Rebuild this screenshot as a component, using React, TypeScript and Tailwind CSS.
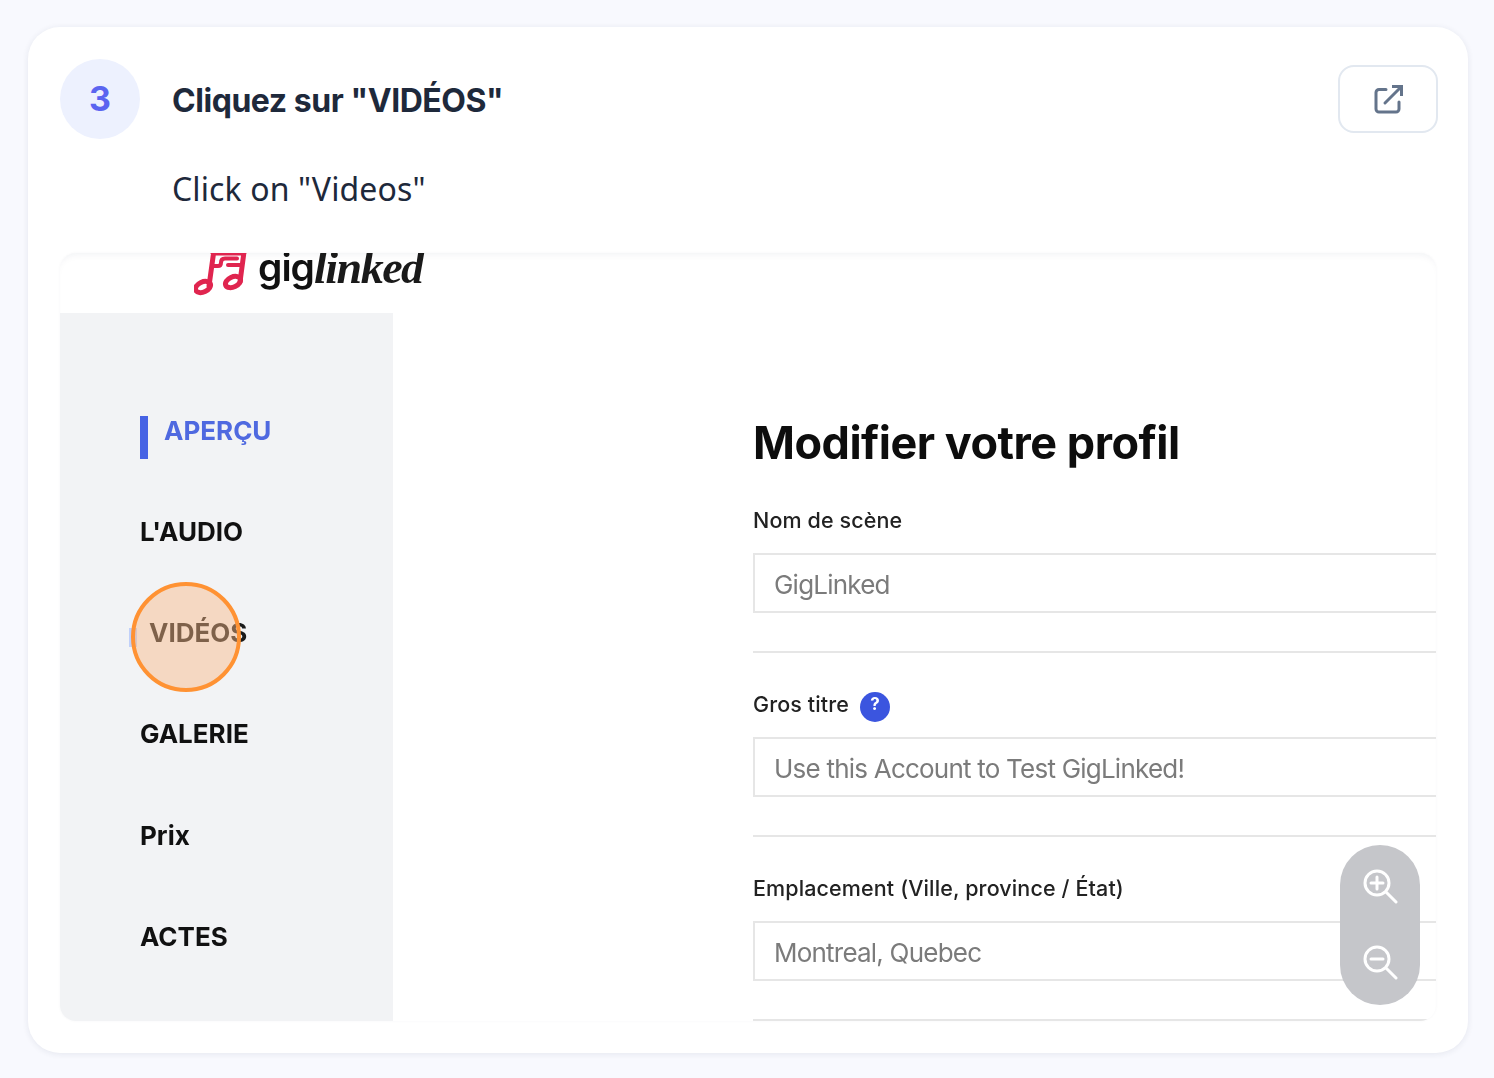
import React from "react";

const inter = "font-['Inter','Liberation_Sans',sans-serif]";

function NavItem({ label, active, shifted }: { label: string; active?: boolean; shifted?: boolean }) {
  return (
    <div className="relative flex h-[101.25px] items-center">
      {active && <div className="absolute left-0 top-[36px] h-[43px] w-[8px] bg-[#4763e4]" />}
      {shifted && <div className="absolute left-[-11px] top-[45px] h-[19px] w-[8px] bg-[#c0d0fa]" />}
      <span
        className={`text-[26px] font-bold leading-none tracking-[0px] ${active ? "ml-[24px] text-[#4f69e0]" : shifted ? "ml-[9px] text-[#1a1a1a]" : "text-[#111111]"}`}
      >
        {label}
      </span>
    </div>
  );
}

function Field({ label, value, help }: { label: string; value: string; help?: boolean }) {
  return (
    <div className="h-[184px] border-b-2 border-[#e6e6e6] pt-[35px]">
      <div className="flex h-[34px] items-center gap-[11px] text-[21.5px] font-medium leading-none tracking-[0.12px] text-[#222222]">
        <span>{label}</span>
        {help && (
          <span className="mt-[4px] flex h-[30px] w-[30px] items-center justify-center rounded-full bg-[#3b55df] pb-[6px] text-[17px] font-bold leading-none text-white">
            ?
          </span>
        )}
      </div>
      <div className="mt-[15px] flex h-[60px] items-center border-2 border-r-0 border-[#e6e6e6] pl-[19px] pt-[3px] text-[26px] leading-none tracking-[-0.78px] text-[#7b7b7b]">
        {value}
      </div>
    </div>
  );
}

export default function App() {
  return (
    <div className="min-h-[1078px] bg-[#f8f9fe] pb-[25px] pl-[28px] pt-[27px]">
      <div className="h-[1026px] w-[1440px] rounded-[32px] bg-white p-[32px] pr-[30px] shadow-[0_1px_6px_rgba(30,41,80,0.09)]">
        <div className="flex items-start">
          <div className="flex h-[80px] w-[80px] shrink-0 items-center justify-center rounded-full bg-[#edf1fe] font-['Inter','Liberation_Sans',sans-serif] text-[34px] font-bold leading-none text-[#5b65f0]">
            3
          </div>
          <div className="ml-[32px] flex-1 font-['Inter','Liberation_Sans',sans-serif] text-[#1e293b]">
            <h1 className="mt-[19px] text-[32px] font-bold leading-[46px] tracking-[-0.45px]">Cliquez sur "VIDÉOS"</h1>
          </div>
          <button className="mt-[6px] flex h-[68px] w-[100px] items-center justify-center rounded-[16px] border-2 border-[#e2e8f0] bg-white">
            <svg width="32" height="32" viewBox="0 0 32 32" fill="none" stroke="#64748b" strokeWidth="3" strokeLinecap="round" className="-ml-[1px] -mt-[1px]">
              <path d="M14 6.500H7a3 3 0 0 0-3 3V26a3 3 0 0 0 3 3h17a3 3 0 0 0 3-3v-7" strokeLinejoin="round" />
              <path d="M13 20 29 4" />
              <path d="M20 3.500h9.500V13" strokeLinecap="butt" strokeLinejoin="miter" />
            </svg>
          </button>
        </div>
        <p className="ml-[112px] mt-[26px] font-['Noto_Sans','Liberation_Sans',sans-serif] text-[32px] leading-[48px] tracking-[0.12px] text-[#1e293b]">
          Click on "Videos"
        </p>

        <div className={`relative mt-[40px] h-[768px] w-[1376px] overflow-hidden rounded-[16px] bg-white shadow-[inset_0_6px_8px_-6px_rgba(30,41,80,0.08),0_0_3px_rgba(30,41,80,0.04)] ${inter}`}>
          <div className="relative h-[60px] overflow-hidden">
            <div className="ml-[134px] flex h-[60px] items-start blur-[0.5px]">
              <svg width="56" height="46" viewBox="0 0 56 46" fill="none" stroke="#e0254f" strokeWidth="5" strokeLinecap="round" className="-mt-[3px]">
                <path d="M20 0 15 36M50 2 46 32M19 3H50" />
                <path d="M18 16H24Q27 16 27 12.500Q27 8.500 31 8.500H43M34 15H47" strokeWidth="4" />
                <ellipse cx="9" cy="37" rx="8" ry="5" transform="rotate(-25 9 37)" />
                <ellipse cx="39" cy="32" rx="8" ry="5" transform="rotate(-25 39 32)" />
              </svg>
              <span className="ml-[8px] -mt-[9px] text-[39px] font-semibold leading-[46px] tracking-[-1px] text-[#111111]">gig</span>
              <span className="-mt-[8px] font-['Liberation_Serif',serif] text-[46px] font-bold italic leading-[46px] tracking-[-1.5px] text-[#1a1a1a]">linked</span>
            </div>
          </div>
          <div className="flex h-[708px] blur-[0.5px]">
            <nav className="h-full w-[333px] shrink-0 bg-[#f2f3f5] pl-[80px] pt-[67px]">
              <NavItem label="APERÇU" active />
              <NavItem label="L'AUDIO" />
              <NavItem label="VIDÉOS" shifted />
              <NavItem label="GALERIE" />
              <NavItem label="Prix" />
              <NavItem label="ACTES" />
            </nav>
            <main className="flex-1 pl-[360px] pt-[100px]">
              <h2 className="h-[56px] text-[45px] font-bold leading-[60px] tracking-[-0.5px] text-[#0d0d0d]">Modifier votre profil</h2>
              <Field label="Nom de scène" value="GigLinked" />
              <Field label="Gros titre" value="Use this Account to Test GigLinked!" help />
              <Field label="Emplacement (Ville, province / État)" value="Montreal, Quebec" />
            </main>
          </div>

          <div className="absolute left-[71px] top-[329px] h-[110px] w-[110px] rounded-full border-[4px] border-[#ff9233] bg-[rgba(249,183,132,0.45)]" />

          <div className="absolute left-[1280px] top-[592px] flex h-[160px] w-[80px] flex-col items-center justify-between rounded-full bg-[#c5c6ca] pb-[25px] pt-[23px]">
            <svg width="36" height="36" viewBox="0 0 36 36" fill="none" stroke="#ffffff" strokeWidth="3" strokeLinecap="round" className="-ml-[1px]">
              <circle cx="15" cy="15" r="12" />
              <path d="M24 24l10 10" />
              <path d="M15 9v12M9 15h12" />
            </svg>
            <svg width="36" height="36" viewBox="0 0 36 36" fill="none" stroke="#ffffff" strokeWidth="3" strokeLinecap="round" className="-ml-[1px]">
              <circle cx="15" cy="15" r="12" />
              <path d="M24 24l10 10" />
              <path d="M9 15h12" />
            </svg>
          </div>
        </div>
      </div>
    </div>
  );
}
